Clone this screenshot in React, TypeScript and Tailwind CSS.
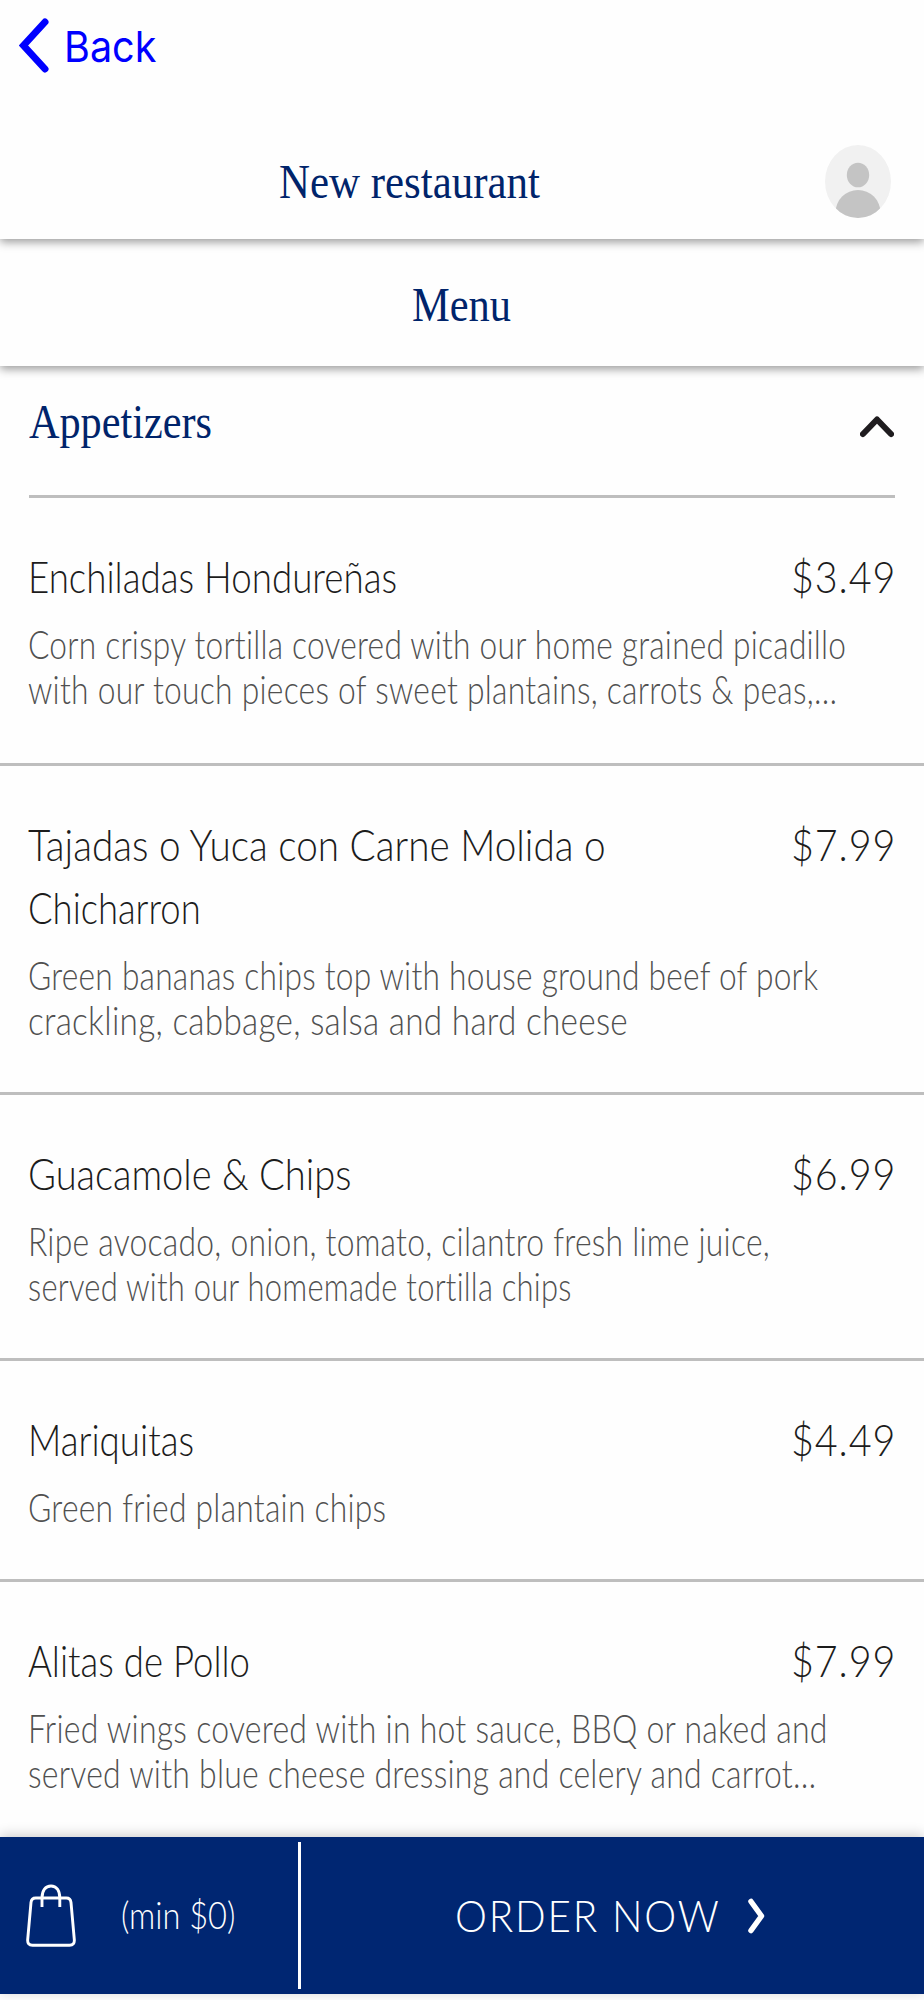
import { useLayoutEffect, useRef } from 'react'

type FitProps = {
  text: string
  width: number
  className?: string
}

type MenuItem = {
  name: [string, number][]
  price: string
  description: [string, number][]
  spacing?: string
}

const items: MenuItem[] = [
  {
    name: [['Enchiladas Hondureñas', 369]],
    price: '$3.49',
    description: [
      ['Corn crispy tortilla covered with our home grained picadillo', 818],
      ['with our touch pieces of sweet plantains, carrots & peas,…', 809],
    ],
    spacing: 'pb-[51px]',
  },
  {
    name: [
      ['Tajadas o Yuca con Carne Molida o', 578],
      ['Chicharron', 173],
    ],
    price: '$7.99',
    description: [
      ['Green bananas chips top with house ground beef of pork', 790],
      ['crackling, cabbage, salsa and hard cheese', 600],
    ],
  },
  {
    name: [['Guacamole & Chips', 323]],
    price: '$6.99',
    description: [
      ['Ripe avocado, onion, tomato, cilantro fresh lime juice,', 742],
      ['served with our homemade tortilla chips', 544],
    ],
  },
  {
    name: [['Mariquitas', 166]],
    price: '$4.49',
    description: [['Green fried plantain chips', 358]],
  },
  {
    name: [['Alitas de Pollo', 222]],
    price: '$7.99',
    description: [
      ['Fried wings covered with in hot sauce, BBQ or naked and', 800],
      ['served with blue cheese dressing and celery and carrot…', 788],
    ],
  },
]

// Condenses a single line of text to the given width
function Fit({ text, width, className = '' }: FitProps) {
  const ref = useRef<HTMLSpanElement>(null)

  useLayoutEffect(() => {
    const el = ref.current
    if (el) el.style.transform = `scaleX(${width / el.offsetWidth})`
  }, [text, width])

  return (
    <span className="block" style={{ width }}>
      <span ref={ref} className={`inline-block origin-left whitespace-nowrap align-top ${className}`}>
        {text}
      </span>
    </span>
  )
}

function Avatar() {
  return (
    <svg className="w-[66px] h-[73px]" viewBox="0 0 66 73" preserveAspectRatio="none">
      <defs>
        <clipPath id="avatar">
          <ellipse cx="33" cy="36.5" rx="33" ry="36.5" />
        </clipPath>
      </defs>
      <g clipPath="url(#avatar)">
        <rect width="66" height="73" fill="#f1f1f1" />
        <ellipse cx="33" cy="30" rx="11.2" ry="12.3" fill="#c4c4c4" />
        <ellipse cx="33" cy="67.5" rx="22.5" ry="22.5" fill="#c4c4c4" />
      </g>
    </svg>
  )
}

function Bag() {
  return (
    <svg className="w-[50px] h-[64px]" viewBox="0 0 50 64" fill="none" stroke="#fff" strokeWidth="2.9">
      <path d="M9.7 14 H40.3 Q44.5 14 45 18.5 L48.3 55.5 Q48.8 61.2 43.5 61.2 H6.5 Q1.2 61.2 1.7 55.5 L5 18.5 Q5.5 14 9.7 14 Z" />
      <path d="M16 23 V14 C16 6.500 19.500 2 25 2 S33.800 6.500 33.800 14 V23" />
    </svg>
  )
}

function Item({ item }: { item: MenuItem }) {
  return (
    <li className={`border-b-[3px] border-[#bebebe] pl-[28px] pr-[28px] pt-[47px] ${item.spacing ?? 'pb-[49px]'}`}>
      <div className="flex justify-between text-[44px] leading-[63px] text-[#1c1c1c]">
        <h3>
          {item.name.map(([text, width]) => (
            <Fit key={text} text={text} width={width} />
          ))}
        </h3>
        <Fit text={item.price} width={105} className="tracking-[1px]" />
      </div>
      <p className="mt-[14px] text-[39px] leading-[45px] tracking-[0.3px] text-[#505050]">
        {item.description.map(([text, width]) => (
          <Fit key={text} text={text} width={width} />
        ))}
      </p>
    </li>
  )
}

export default function App() {
  return (
    <div className="flex h-[2000px] w-[924px] flex-col overflow-hidden bg-[#fefefe] font-['Lato',sans-serif] font-light [font-variant-ligatures:none]">
      <header className="relative z-20 h-[239px] shrink-0 bg-[#fefefe] shadow-[0_3px_9px_rgba(0,0,0,0.4)]">
        <button className="flex h-[92px] items-center pl-[19px] font-['Inter',sans-serif] font-normal text-[#0000ff]">
          <svg className="-mt-[2px] w-[30px] h-[55px]" viewBox="0 0 30 55" fill="none">
            <path d="M26 4 L4.500 27.500 L26 51" stroke="#0000ff" strokeWidth="7" strokeLinecap="round" />
          </svg>
          <Fit text="Back" width={92} className="ml-[15px] text-[43px] leading-[60px]" />
        </button>
        <div className="flex items-start justify-between pl-[279px] pr-[33px] font-['Liberation_Serif',serif] font-normal text-[#00246b]">
          <h1 className="pt-[60px]">
            <Fit text="New restaurant" width={261} className="text-[48px] leading-[60px]" />
          </h1>
          <div className="pt-[53px]">
            <Avatar />
          </div>
        </div>
      </header>

      <div className="relative z-10 flex h-[127px] shrink-0 justify-center bg-[#fefefe] pr-[2px] pt-[36px] font-['Liberation_Serif',serif] font-normal text-[#00246b] shadow-[0_3px_9px_rgba(0,0,0,0.4)]">
        <Fit text="Menu" width={99} className="text-[48px] leading-[60px]" />
      </div>

      <main className="h-[1471px] shrink-0 overflow-hidden">
        <div className="mx-[29px] flex h-[132px] justify-between border-b-[3px] border-[#bebebe] pt-[26px]">
          <h2 className="font-['Liberation_Serif',serif] font-normal text-[#00246b]">
            <Fit text="Appetizers" width={183} className="text-[48px] leading-[60px]" />
          </h2>
          <svg className="mr-[1px] mt-[24px] w-[34px] h-[22px]" viewBox="0 0 34 22" fill="none">
            <path d="M3 18 L17 3.500 L31 18" stroke="#1f1c1f" strokeWidth="6" strokeLinecap="round" strokeLinejoin="round" />
          </svg>
        </div>
        <ul>
          {items.map((item) => (
            <Item key={item.name[0][0]} item={item} />
          ))}
        </ul>
      </main>

      <footer className="relative flex h-[157px] shrink-0 items-center bg-[#002672] text-white shadow-[0_-2px_12px_rgba(0,0,0,0.2)]">
        <div className="flex h-[147px] w-[301px] items-center border-r-[3px] border-white pl-[26px]">
          <Bag />
          <Fit text="(min $0)" width={114} className="-mt-[4px] ml-[45px] text-[38px] leading-[60px]" />
        </div>
        <button className="flex items-center pl-[154px]">
          <Fit text="ORDER NOW" width={266} className="-mt-[2px] text-[44px] leading-[60px] tracking-[2px]" />
          <svg className="ml-[27px] w-[17px] h-[36px]" viewBox="0 0 17 36" fill="none">
            <path d="M3 3.500 L13.500 18 L3 32.500" stroke="#fff" strokeWidth="5.500" strokeLinecap="round" strokeLinejoin="round" />
          </svg>
        </button>
      </footer>
    </div>
  )
}
